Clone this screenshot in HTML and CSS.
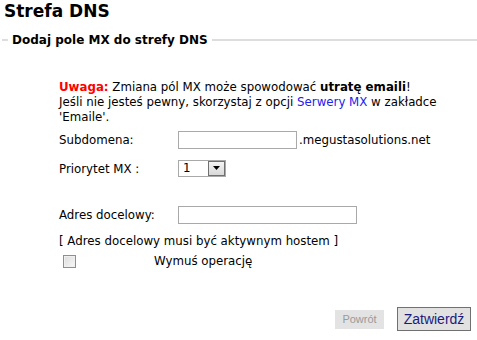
FILE: index.html
```html
<!DOCTYPE html>
<html lang="pl">
<head>
    <meta charset="UTF-8">
    <title>Strefa DNS</title>
    <link rel="stylesheet" href="styles.css">
</head>
<body>
    <h1 class="page-title">Strefa DNS</h1>

    <fieldset class="dns-box">
        <legend>Dodaj pole MX do strefy DNS</legend>

        <div class="content">
            <p class="warning">
                <span class="warn-label">Uwaga:</span> Zmiana pól MX może spowodować <strong>utratę emaili</strong>!<br>
                Jeśli nie jesteś pewny, skorzystaj z opcji <a href="#">Serwery MX</a> w zakładce 'Emaile'.
            </p>

            <div class="form-row">
                <label for="sub">Subdomena:</label>
                <div class="field">
                    <input type="text" id="sub" class="input-sub"><span class="suffix">.megustasolutions.net</span>
                </div>
            </div>

            <div class="form-row">
                <label for="prio">Priorytet MX :</label>
                <div class="field">
                    <div class="select">
                        <span class="select-value">1</span>
                        <span class="select-btn">
                            <svg width="9" height="5" viewBox="0 0 9 5"><path d="M1 0h7L4.5 4z" fill="#000"/></svg>
                        </span>
                    </div>
                </div>
            </div>

            <div class="form-row row-target">
                <label for="target">Adres docelowy:</label>
                <div class="field">
                    <input type="text" id="target" class="input-target">
                </div>
            </div>

            <p class="note">[ Adres docelowy musi być aktywnym hostem ]</p>

            <div class="check-row">
                <span class="checkbox"></span>
                <span class="check-label">Wymuś operację</span>
            </div>
        </div>

        <div class="actions">
            <button class="btn btn-back" disabled>Powrót</button>
            <button class="btn btn-submit">Zatwierdź</button>
        </div>
    </fieldset>
</body>
</html>
```

FILE: styles.css
```css
body {
    margin: 0;
    padding: 0;
    font-family: "DejaVu Sans", Verdana, sans-serif;
    font-size: 11.8px;
    color: #000;
    background-color: #fff;
}
.page-title {
    margin: 0;
    padding: 1px 0 0 4px;
    font-size: 17px;
    line-height: 20px;
    font-weight: bold;
}
.dns-box {
    margin: 11px 0 0 2px;
    padding: 0;
    border: 0;
    border-top: 2px solid #dddddd;
    min-width: 0;
}
.dns-box legend {
    margin-left: 6px;
    padding: 0 4px;
    font-size: 12px;
    font-weight: bold;
    line-height: 16px;
}
.content {
    padding: 0 0 0 57px;
}
.warning {
    margin: 32px 0 0;
    width: 390px;
    line-height: 15px;
}
.warn-label {
    color: #ff0000;
    font-weight: bold;
}
.warning a {
    color: #2222ee;
    text-decoration: none;
}
.form-row {
    display: grid;
    grid-template-columns: 119px auto;
    align-items: center;
    margin-top: 11px;
}
.warning + .form-row {
    margin-top: 6px;
}
.form-row.row-target {
    margin-top: 29px;
}
.field {
    display: flex;
    align-items: center;
}
input[type="text"] {
    box-sizing: border-box;
    height: 18px;
    margin: 0;
    padding: 0 3px;
    border: 1px solid #a9a9a9;
    font: inherit;
}
.input-sub {
    width: 119px;
}
.suffix {
    margin-left: 2px;
}
.input-target {
    width: 179px;
}
.select {
    box-sizing: border-box;
    width: 48px;
    height: 17px;
    border: 1px solid #a9a9a9;
    display: flex;
    align-items: stretch;
}
.select-value {
    flex: 1;
    padding-left: 4px;
    line-height: 15px;
}
.select-btn {
    width: 15px;
    border: 1px solid #707070;
    background: linear-gradient(#f4f4f4, #d8d8d8);
    display: flex;
    align-items: center;
    justify-content: center;
}
.note {
    margin: 10px 0 0;
    line-height: 15px;
}
.check-row {
    display: flex;
    align-items: center;
    margin-top: 4px;
    height: 16px;
}
.checkbox {
    box-sizing: border-box;
    width: 13px;
    height: 13px;
    margin-left: 4px;
    border: 1px solid #8f8f8f;
    background: linear-gradient(135deg, #dcdcdc, #f8f8f8);
    box-shadow: inset 0 0 0 1px #f0f0f0;
}
.check-label {
    margin-left: 78px;
}
.actions {
    display: flex;
    justify-content: flex-end;
    align-items: center;
    gap: 13px;
    margin-top: 38px;
    padding-right: 6px;
}
.btn {
    font-family: "Liberation Sans", Arial, sans-serif;
    margin: 0;
    cursor: pointer;
}
.btn-back {
    height: 19px;
    width: 49px;
    padding: 0;
    border: 0;
    background: #e3e3e3;
    color: #9a9a9a;
    font-size: 11px;
}
.btn-submit {
    height: 24px;
    width: 74px;
    padding: 0;
    border: 1px solid #707070;
    background: #e1e1e1;
    color: #1a1a80;
    font-size: 14px;
}
```
